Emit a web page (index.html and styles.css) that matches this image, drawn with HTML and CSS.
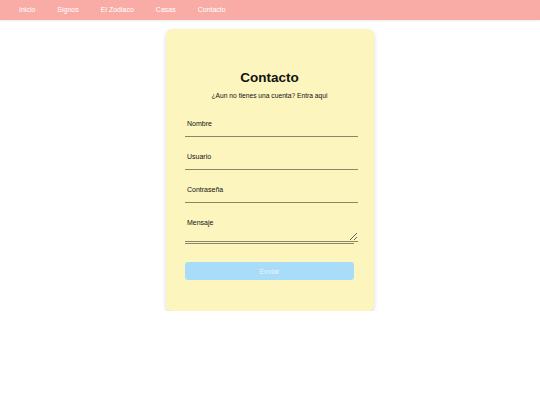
FILE: index.html
```html
<!DOCTYPE html>
<html lang="es">
<head>
<meta charset="utf-8">
<title>Contacto</title>
<link rel="stylesheet" href="styles.css">
</head>
<body>
<nav class="nav">
  <a class="nav-link" href="#">Inicio</a>
  <a class="nav-link" href="#">Signos</a>
  <a class="nav-link" href="#">El Zodiaco</a>
  <a class="nav-link" href="#">Casas</a>
  <a class="nav-link" href="#">Contacto</a>
</nav>
<main class="main">
  <section class="card">
    <h2 class="title">Contacto</h2>
    <p class="subtitle">¿Aun no tienes una cuenta? Entra aqui</p>
    <form class="form">
      <input class="field" type="text" placeholder="Nombre">
      <input class="field" type="text" placeholder="Usuario">
      <input class="field" type="password" placeholder="Contraseña">
      <div class="area-wrap">
        <textarea class="field area" placeholder="Mensaje"></textarea>
      </div>
      <button class="btn" type="button">Enviar</button>
    </form>
  </section>
</main>
</body>
</html>
```
FILE: styles.css
```css
html, body {
  margin: 0;
  padding: 0;
  background: #ffffff;
  font-family: "Liberation Sans", Arial, sans-serif;
}

.nav {
  display: flex;
  align-items: center;
  height: 20px;
  padding: 0 8px;
  background: #f9aca6;
  box-shadow: 0 1px 2px rgba(0, 0, 0, 0.08);
}

.nav-link {
  padding: 0 11px;
  color: #ffffff;
  font-size: 7px;
  line-height: 8px;
  text-decoration: none;
}

.main {
  display: flex;
  justify-content: center;
  padding-top: 9px;
}

.card {
  width: 169px;
  padding: 41px 20px 31px 19px;
  background: #fcf5be;
  border-radius: 6px;
  box-shadow: 0 2px 4px rgba(0, 0, 0, 0.16);
}

.title {
  margin: 0;
  text-align: center;
  font-size: 13.5px;
  line-height: 16px;
  font-weight: bold;
  color: #111111;
}

.subtitle {
  margin: 6px 0 0;
  text-align: center;
  font-size: 6.7px;
  line-height: 8px;
  color: #111111;
}

.form {
  display: flex;
  flex-direction: column;
  margin-top: 12px;
}

.field {
  display: block;
  width: 100%;
  margin: 0 0 8px;
  padding: 8px 2px 8px;
  border: none;
  border-bottom: 1px solid #8a8765;
  background: transparent;
  font-family: "Liberation Sans", Arial, sans-serif;
  font-size: 7px;
  line-height: 8px;
  color: #111111;
  outline: none;
}

.field::placeholder {
  color: #111111;
  opacity: 1;
}

.area-wrap {
  border-bottom: 1px solid #8a8765;
}

.area {
  height: 14px;
  margin: 0 0 1px;
  resize: vertical;
}

.btn {
  margin-top: 18px;
  height: 18px;
  width: 100%;
  border: none;
  border-radius: 3px;
  background: #a9dcf8;
  color: #e9f5fc;
  font-family: "Liberation Sans", Arial, sans-serif;
  font-size: 7px;
}
```
